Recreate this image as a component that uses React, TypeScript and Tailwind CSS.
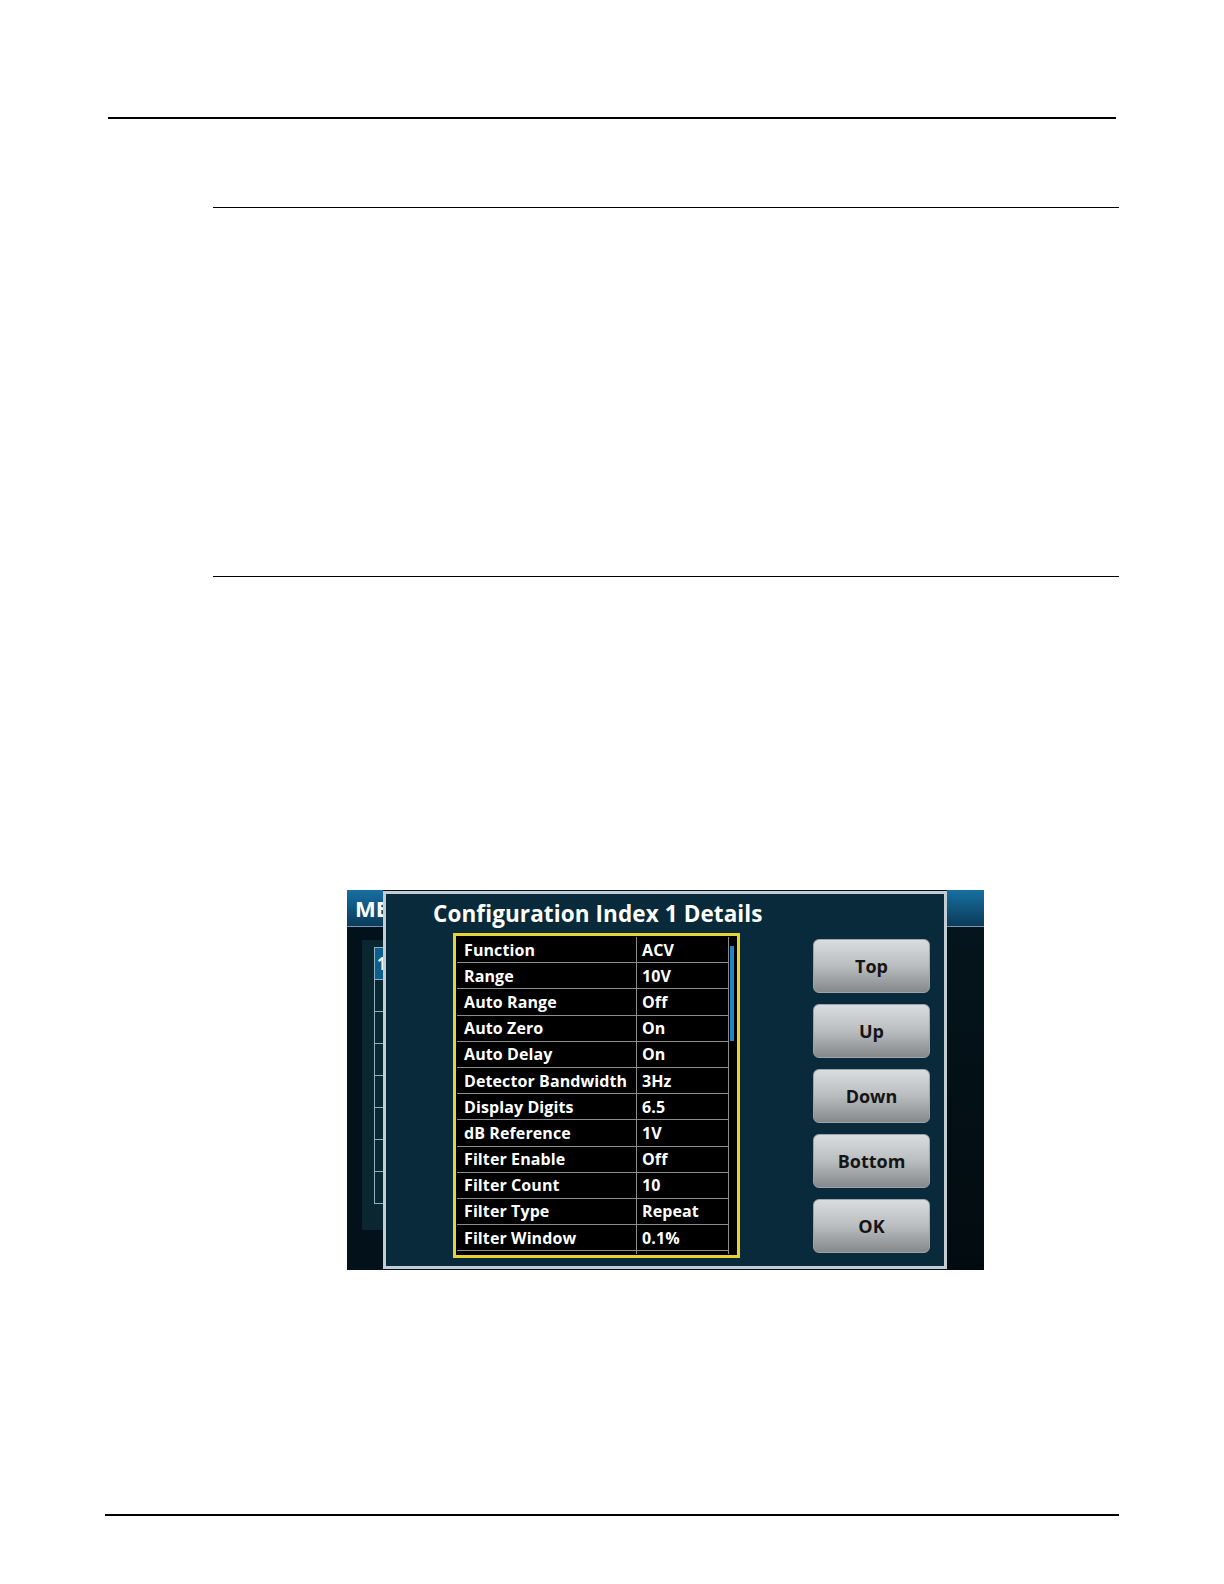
const ROWS = [
  ['Function', 'ACV'],
  ['Range', '10V'],
  ['Auto Range', 'Off'],
  ['Auto Zero', 'On'],
  ['Auto Delay', 'On'],
  ['Detector Bandwidth', '3Hz'],
  ['Display Digits', '6.5'],
  ['dB Reference', '1V'],
  ['Filter Enable', 'Off'],
  ['Filter Count', '10'],
  ['Filter Type', 'Repeat'],
  ['Filter Window', '0.1%'],
]

const BUTTONS = ['Top', 'Up', 'Down', 'Bottom', 'OK']

const font = { fontFamily: '"Open Sans", "DejaVu Sans", sans-serif' }

const LeftStrip = () => (
  <div className="w-[36px] h-full shrink-0 flex flex-col bg-[#03121a] overflow-hidden">
    <div className="h-[37px] shrink-0 bg-gradient-to-b from-[#1670a2] to-[#0b3b5a] border-b border-[#6f9ab4] pl-[8px] flex items-center">
      <span className="text-white font-bold text-[22px] leading-none whitespace-nowrap">ME</span>
    </div>
    <div className="mt-[13px] ml-[15px] h-[290px] bg-[#0a2630] pt-[7px] pl-[12px]">
      {Array.from({ length: 8 }).map((_, i) => (
        <div
          key={i}
          className={
            'h-[33px] border border-r-0 border-[#8fb0c0] -mt-px first:mt-0 pl-[2px] flex items-center ' +
            (i === 0 ? 'bg-[#0d5f8c]' : '')
          }
        >
          {i === 0 && <span className="text-white font-bold text-[17px] leading-none">1</span>}
        </div>
      ))}
    </div>
  </div>
)

const RightStrip = () => (
  <div className="w-[37px] h-full shrink-0 flex flex-col bg-gradient-to-b from-[#06161e] to-[#020b10]">
    <div className="h-[37px] shrink-0 bg-gradient-to-b from-[#1670a2] to-[#0b3b5a] border-b border-[#6f9ab4]" />
  </div>
)

const DetailsTable = () => (
  <div className="w-[287px] h-[325px] border-[3px] border-[#e6d232] bg-black p-px flex">
    <div className="flex-1 flex flex-col">
      {ROWS.map(([label, value]) => (
        <div
          key={label}
          className="h-[26.2px] shrink-0 flex border-b border-[#8c8c8c] text-white font-bold text-[16px] tracking-[0.1px]"
        >
          <div className="w-[180px] shrink-0 border-r border-[#8c8c8c] pl-[7px] flex items-center whitespace-nowrap">
            {label}
          </div>
          <div className="flex-1 pl-[5px] flex items-center">{value}</div>
        </div>
      ))}
      <div className="flex-1 flex">
        <div className="w-[180px] border-r border-[#8c8c8c]" />
      </div>
    </div>
    <div className="w-[8px] shrink-0 border-l border-[#8c8c8c] pt-[9px] pl-[1px]">
      <div className="w-[4px] h-[95px] bg-[#1f86c4]" />
    </div>
  </div>
)

const Dialog = () => (
  <div className="w-[564px] h-[378px] mt-px shrink-0 border-[3px] border-[#c3ccd2] bg-[#082a3a] flex flex-col">
    <div className="pl-[47px] pt-[6px] h-[39px] text-white font-bold text-[22.5px] leading-[28px] tracking-[0.1px] whitespace-nowrap">
      Configuration Index 1 Details
    </div>
    <div className="flex pl-[67px]">
      <DetailsTable />
      <div className="ml-[73px] mt-[6px] flex flex-col gap-[11px]">
        {BUTTONS.map((b) => (
          <div
            key={b}
            className="w-[117px] h-[54px] rounded-[6px] bg-gradient-to-b from-[#d9dde0] via-[#b9bdc0] to-[#86898c] border border-[#9aa4aa] flex items-center justify-center text-[#151515] font-bold text-[18px]"
          >
            {b}
          </div>
        ))}
      </div>
    </div>
  </div>
)

export default function App() {
  return (
    <div className="w-[1224px] h-[1584px] bg-white flex flex-col overflow-hidden" style={font}>
      <div className="mt-[117px] ml-[108px] w-[1008px] h-[2px] bg-black" />
      <div className="mt-[88px] ml-[213px] w-[906px] h-px bg-black" />
      <div className="mt-[368px] ml-[213px] w-[906px] h-px bg-black" />

      <div className="mt-[313px] ml-[347px] w-[637px] h-[380px] flex bg-[#03121a]">
        <LeftStrip />
        <Dialog />
        <RightStrip />
      </div>

      <div className="mt-[244px] ml-[105px] w-[1014px] h-[2px] bg-black" />
    </div>
  )
}
